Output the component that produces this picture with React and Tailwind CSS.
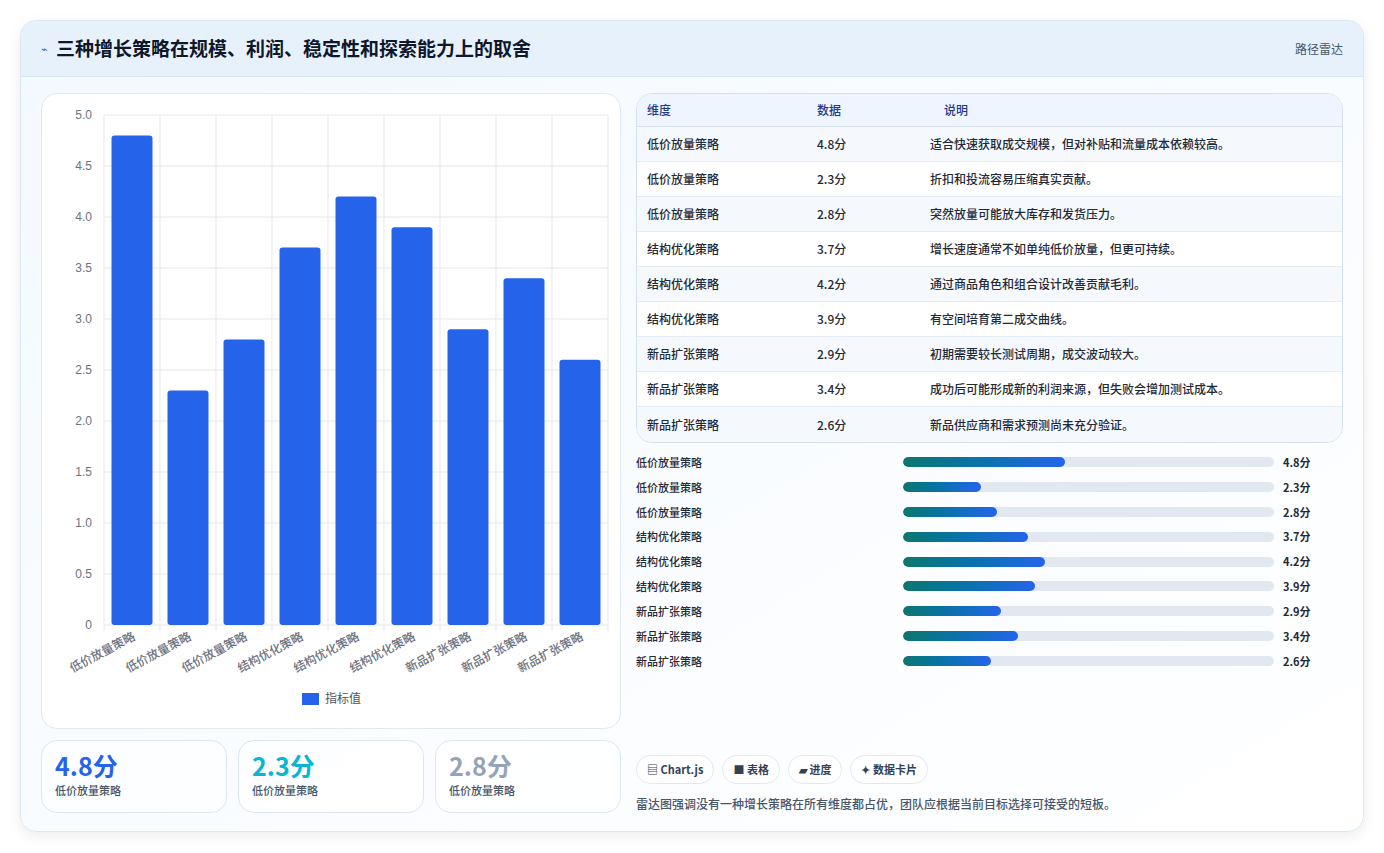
const rows=[["低价放量策略",4.8,"适合快速获取成交规模，但对补贴和流量成本依赖较高。"],["低价放量策略",2.3,"折扣和投流容易压缩真实贡献。"],["低价放量策略",2.8,"突然放量可能放大库存和发货压力。"],["结构优化策略",3.7,"增长速度通常不如单纯低价放量，但更可持续。"],["结构优化策略",4.2,"通过商品角色和组合设计改善贡献毛利。"],["结构优化策略",3.9,"有空间培育第二成交曲线。"],["新品扩张策略",2.9,"初期需要较长测试周期，成交波动较大。"],["新品扩张策略",3.4,"成功后可能形成新的利润来源，但失败会增加测试成本。"],["新品扩张策略",2.6,"新品供应商和需求预测尚未充分验证。"]];
const F={fontFamily:'"Noto Sans CJK SC","Noto Sans",sans-serif'};
function Chart(){const x0=62,y0=531,h=510,w=504,cw=w/9;
return(<svg width="578" height="634" style={F}>
{[0,0.5,1,1.5,2,2.5,3,3.5,4,4.5,5].map(v=>{const y=y0-v/5*h;return(<g key={v}><line x1={x0} x2={x0+w} y1={y} y2={y} stroke="#e5e7eb"/><text x={x0-12} y={y+4} textAnchor="end" fontSize="12" fill="#6b7280" fontFamily="Liberation Sans">{v===0?"0":v.toFixed(1)}</text></g>)})}
{Array.from({length:10}).map((_,i)=><line key={i} x1={x0+i*cw} x2={x0+i*cw} y1={y0-h} y2={y0+6} stroke="#e5e7eb"/>)}
{rows.map((r,i)=>{const bh=r[1]/5*h;const cx=x0+i*cw+cw/2;return(<g key={i}><rect x={cx-20.5} y={y0-bh} width="41" height={bh} rx="3" fill="#2563eb"/><text transform={`translate(${cx+4},${y0+14}) rotate(-28)`} textAnchor="end" fontSize="12" fontWeight="500" fill="#6b7280">{r[0]}</text></g>)})}
<rect x="260" y="599" width="17" height="12" fill="#2563eb"/><text x="283" y="609" fontSize="12" fill="#4b5563">指标值</text>
</svg>)}
export default function App(){return(
<div className="w-[1384px] h-[853px] bg-white p-5" style={F}>
<div className="h-[812px] rounded-2xl border border-[#dbe7f3] bg-gradient-to-br from-[#f3f9ff] to-white shadow-[0_4px_14px_rgba(15,23,42,0.08)] overflow-hidden">
<div className="h-[56px] bg-[#e6f1fc] border-b border-[#d6e6f5] flex items-center justify-between px-5">
<div className="flex items-center gap-2"><span className="text-[#2563eb] text-[11px]">⌁</span><span className="text-[19px] font-bold text-[#0f172a]">三种增长策略在规模、利润、稳定性和探索能力上的取舍</span></div>
<span className="text-[12px] text-[#475569]">路径雷达</span></div>
<div className="flex gap-[15px] px-5 pt-[16px]">
<div className="w-[580px] flex flex-col gap-[11px]">
<div className="h-[636px] rounded-2xl border border-[#e2e8f0] bg-white"><Chart/></div>
<div className="flex gap-[11px]">
{[["4.8分","text-[#2563eb]"],["2.3分","text-[#06b6d4]"],["2.8分","text-[#94a3b8]"]].map(([v,c],i)=>(
<div key={i} className="w-[186px] h-[73px] rounded-2xl border border-[#dbe7f3] bg-white/70 px-[13px] pt-[9px]">
<div className={`text-[25px] font-bold leading-[30px] ${c}`}>{v}</div><div className="text-[11px] text-[#475569] font-medium mt-[2px]">低价放量策略</div></div>))}
</div></div>
<div className="w-[710px] flex flex-col">
<div className="rounded-2xl border border-[#d6e0ec] bg-white overflow-hidden">
<div className="h-[33px] bg-[#eef5ff] border-b border-[#d6e0ec] flex items-center text-[12px] text-[#1e3a8a] font-medium"><span className="w-[180px] pl-[10px]">维度</span><span className="w-[127px]">数据</span><span>说明</span></div>
{rows.map((r,i)=><div key={i} className={`h-[35px] flex items-center text-[12px] text-[#1f2937] font-medium ${i<8?"border-b border-[#e5edf5]":""} ${i%2===0?"bg-[#f5f9fd]":"bg-white"}`}><span className="w-[180px] pl-[10px]">{r[0]}</span><span className="w-[113px]">{r[1]}分</span><span>{r[2]}</span></div>)}
</div>
<div className="mt-[10px] flex flex-col gap-[6.9px]">
{rows.map((r,i)=><div key={i} className="h-[18px] flex items-center text-[11px] font-medium text-[#1f2937]"><span className="w-[267px]">{r[0]}</span><div className="w-[371px] h-[10px] rounded-full bg-[#e2e8f0] overflow-hidden"><div className="h-full rounded-full bg-gradient-to-r from-[#0f766e] to-[#2563eb]" style={{width:`${r[1]/11*100}%`}}/></div><span className="ml-[9px] font-bold">{r[1]}分</span></div>)}
</div>
<div className="mt-[85px] flex gap-[8px]">
{["▤ Chart.js","■ 表格","▰ 进度","✦ 数据卡片"].map(t=><span key={t} className="h-[29px] px-[10px] rounded-full border border-[#e2e8f0] bg-white flex items-center text-[11px] font-bold text-[#334155]">{t}</span>)}
</div>
<div className="mt-[11px] text-[12px] text-[#475569] font-medium">雷达图强调没有一种增长策略在所有维度都占优，团队应根据当前目标选择可接受的短板。</div>
</div></div></div></div>)}
